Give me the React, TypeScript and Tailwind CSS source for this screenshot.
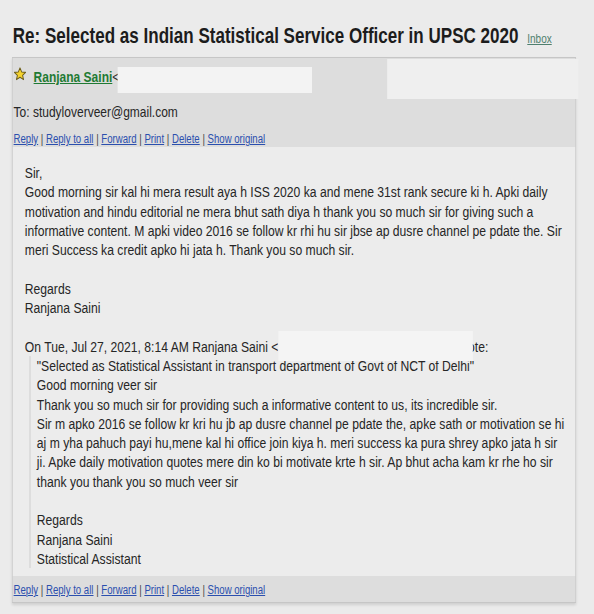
import React from "react"

const links = ["Reply", "Reply to all", "Forward", "Print", "Delete", "Show original"]

const message = [
  "Sir,",
  "Good morning sir kal hi mera result aya h ISS 2020 ka and mene 31st rank secure ki h. Apki daily",
  "motivation and hindu editorial ne mera bhut sath diya h thank you so much sir for giving such a",
  "informative content. M apki video 2016 se follow kr rhi hu sir jbse ap dusre channel pe pdate the. Sir",
  "meri Success ka credit apko hi jata h. Thank you so much sir.",
  "",
  "Regards",
  "Ranjana Saini",
  "",
]

const quoted = [
  "\"Selected as Statistical Assistant in transport department of Govt of NCT of Delhi\"",
  "Good morning veer sir",
  "Thank you so much sir for providing such a informative content to us, its incredible sir.",
  "Sir m apko 2016 se follow kr kri hu jb ap dusre channel pe pdate the, apke sath or motivation se hi",
  "aj m yha pahuch payi hu,mene kal hi office join kiya h. meri success ka pura shrey apko jata h sir",
  "ji. Apke daily motivation quotes mere din ko bi motivate krte h sir. Ap bhut acha kam kr rhe ho sir",
  "thank you thank you so much veer sir",
  "",
  "Regards",
  "Ranjana Saini",
  "Statistical Assistant",
]

function Line({ text }: { text: string }) {
  return <div className="h-[19.3px] whitespace-nowrap">{text === "" ? "\u00a0" : text}</div>
}

function ActionLinks() {
  return (
    <div className="whitespace-nowrap text-[12px] leading-[16px] text-[#444]">
      {links.map((l, i) => (
        <span key={l}>
          {i > 0 && " | "}
          <a href="#" className="text-[#2b4fae] underline">
            {l}
          </a>
        </span>
      ))}
    </div>
  )
}

function Star() {
  return (
    <svg width="16" height="14" viewBox="0 0 24 24" preserveAspectRatio="none" className="shrink-0">
      <path
        d="M12 1.5l3.1 6.9 7.4.8-5.6 5 1.7 7.4L12 17.7 5.4 21.6l1.7-7.4-5.6-5 7.4-.8z"
        fill="#f4d22e"
        stroke="#6b5c1a"
        strokeWidth="1.8"
        strokeLinejoin="round"
      />
    </svg>
  )
}

export default function App() {
  return (
    <div className="h-screen w-full overflow-hidden bg-[#ebebeb] font-['Liberation_Sans',Arial,sans-serif] text-[#262626]">
      {/* the capture is squeezed sideways, so the page is laid out wider and scaled */}
      <div className="w-[742.5px] origin-top-left scale-x-[0.8] pt-[23px]">
        <div className="flex items-baseline pl-[16px]">
          <h1 className="text-[21.3px] font-bold leading-[26px] text-[#1c1c1c]">
            Re: Selected as Indian Statistical Service Officer in UPSC 2020
          </h1>
          <a href="#" className="ml-[11px] text-[12.5px] text-[#4f7f6e] underline">
            Inbox
          </a>
        </div>

        <div className="ml-[15px] mt-[8px] w-[705px] border border-[#c6c6c6] shadow-[0_2px_3px_rgba(0,0,0,0.12)]">
          <div className="relative bg-[#dddddd] pl-[1px] pt-[9px]">
            <div className="flex h-[20px] items-start text-[15px] leading-[20px]">
              <Star />
              <a href="#" className="ml-[9px] font-bold text-[#1f7a33] underline">
                Ranjana Saini
              </a>
              <span>&lt;</span>
              <span className="-ml-[2px] mb-[-6px] h-[26px] w-[243px] bg-[#f3f3f3]" />
            </div>
            <div className="absolute left-[468px] top-[1px] h-[40px] w-[239px] bg-[#efefef]" />
            <div className="mt-[15px] text-[15px] leading-[20px]">To: studyloverveer@gmail.com</div>
            <div className="mt-[9px]">
              <ActionLinks />
            </div>
          </div>

          <div className="bg-[#ececec] pb-[8px] pl-[15px] pt-[16px] text-[15.2px] leading-[19.3px]">
            {message.map((t, i) => (
              <Line key={i} text={t} />
            ))}
            <div className="flex h-[19.3px] items-start whitespace-nowrap">
              <span>On Tue, Jul 27, 2021, 8:14 AM Ranjana Saini &lt;</span>
              <span className="relative z-10 -mr-[6px] -mt-[5.3px] h-[30px] w-[243px] shrink-0 bg-[#f4f4f4]" />
              <span>ote:</span>
            </div>
            <div className="ml-[6px] border-l border-[#c9c9c9] pl-[8px]">
              {quoted.map((t, i) => (
                <Line key={i} text={t} />
              ))}
            </div>
          </div>

          <div className="bg-[#dddddd] pb-[4px] pl-[1px] pt-[6px]">
            <ActionLinks />
          </div>
        </div>
      </div>
    </div>
  )
}
